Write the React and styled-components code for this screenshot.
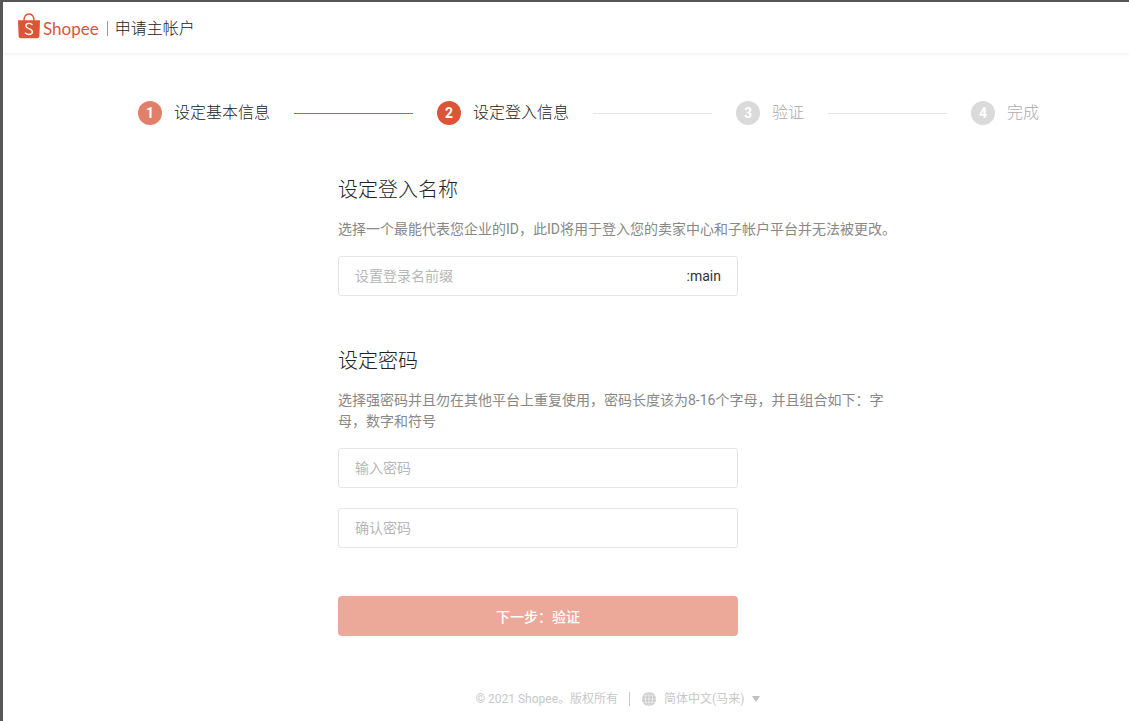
import React, { useState } from 'react'
import styled, { createGlobalStyle } from 'styled-components'

const steps = [
  { label: '设定基本信息', state: 'done' },
  { label: '设定登入信息', state: 'active' },
  { label: '验证', state: 'wait' },
  { label: '完成', state: 'wait' },
]

const circleColors = {
  done: '#e37f67',
  active: '#da5636',
  wait: '#dadada',
}

function ShopeeBag() {
  return (
    <BagIcon viewBox="0 0 22 26" aria-hidden="true">
      <path d="M6 8C6 3.800 8 1 11 1s5 2.800 5 7" fill="none" stroke="#da5636" strokeWidth="1.4" />
      <path d="M.6 7.200h20.800c.4 0 .6.2.6.6L21.400 23c-.1 1.300-.9 2.200-2.200 2.200H2.800C1.500 25.200.7 24.300.6 23L0 7.800c0-.4.2-.6.6-.6z" fill="#da5636" />
      <path d="M14 11.600c-.9-.8-1.900-1.200-3.100-1.200-1.700 0-3 .9-3 2.400 0 1.600 1.400 2.200 3.100 2.800 2 .7 3.400 1.400 3.400 3.200 0 1.700-1.400 2.700-3.400 2.700-1.400 0-2.700-.5-3.700-1.400" fill="none" stroke="#fff" strokeWidth="1.400" strokeLinecap="round" />
    </BagIcon>
  )
}

function Globe() {
  return (
    <GlobeIcon viewBox="0 0 14 14" aria-hidden="true">
      <circle cx="7" cy="7" r="7" fill="#c8c8c8" />
      <path d="M1 3.800h12M0 7h14M1 10.200h12M7 0v14M6 0C2.500 3 2.500 11 6 14M8 0c3.500 3 3.500 11 0 14" fill="none" stroke="#fff" strokeWidth=".6" />
    </GlobeIcon>
  )
}

function App() {
  const [name, setName] = useState('')
  const [password, setPassword] = useState('')
  const [confirm, setConfirm] = useState('')

  return (
    <Page>
      <GlobalStyle />
      <Header>
        <Logo href="#">
          <ShopeeBag />
          <Brand>Shopee</Brand>
        </Logo>
        <HeaderTitle>申请主帐户</HeaderTitle>
      </Header>
      <Main>
        <Steps>
          {steps.map((step, i) => (
            <React.Fragment key={step.label}>
              {i > 0 && <StepLine $done={steps[i - 1].state === 'done'} />}
              <Step>
                <StepNumber $state={step.state}>{i + 1}</StepNumber>
                <StepLabel $state={step.state}>{step.label}</StepLabel>
              </Step>
            </React.Fragment>
          ))}
        </Steps>
        <Form onSubmit={(e) => e.preventDefault()}>
          <Section>
            <Title>设定登入名称</Title>
            <Hint>选择一个最能代表您企业的ID，此ID将用于登入您的卖家中心和子帐户平台并无法被更改。</Hint>
            <Field>
              <Input
                aria-label="设置登录名前缀"
                placeholder="设置登录名前缀"
                value={name}
                onChange={(e) => setName(e.target.value)}
              />
              <Suffix>:main</Suffix>
            </Field>
          </Section>
          <Section>
            <Title>设定密码</Title>
            <Hint>选择强密码并且勿在其他平台上重复使用，密码长度该为8-16个字母，并且组合如下：字母，数字和符号</Hint>
            <Field>
              <Input
                type="password"
                aria-label="输入密码"
                placeholder="输入密码"
                value={password}
                onChange={(e) => setPassword(e.target.value)}
              />
            </Field>
            <Field>
              <Input
                type="password"
                aria-label="确认密码"
                placeholder="确认密码"
                value={confirm}
                onChange={(e) => setConfirm(e.target.value)}
              />
            </Field>
          </Section>
          <NextButton type="submit">下一步：验证</NextButton>
        </Form>
      </Main>
      <Footer>
        <span>© 2021 Shopee。版权所有</span>
        <Language type="button">
          <Globe />
          简体中文(马来)
          <Arrow viewBox="0 0 8 6" aria-hidden="true">
            <path d="M0 0h8L4 6z" fill="#c0c0c0" />
          </Arrow>
        </Language>
      </Footer>
    </Page>
  )
}

export default App

const GlobalStyle = createGlobalStyle`
* {
    box-sizing:border-box;
}
body {
    margin:0;
    background-color:#fff;
    color:#222;
    font-family:Roboto, "Noto Sans CJK SC", sans-serif;
    font-size:14px;
    font-weight:400;
}
`

const Page = styled.div`
min-height:100vh;
border-top:2px solid #595757;
border-left:3px solid #595757;
`

const Header = styled.header`
display:flex;
align-items:center;
height:51px;
padding:2px 15px 0;
box-shadow:0 1px 4px 0 rgba(0, 0, 0, 0.08);
`

const Logo = styled.a`
display:flex;
align-items:center;
gap:3px;
color:#da5636;
text-decoration:none;
`

const BagIcon = styled.svg`
width:22px;
height:26px;
margin-bottom:6px;
`

const Brand = styled.span`
font-family:Lato, sans-serif;
font-size:17px;
line-height:24px;
`

const HeaderTitle = styled.h1`
display:flex;
align-items:center;
margin:0 0 0 8px;
font-size:16px;
line-height:24px;
font-weight:300;

&::before {
    content:'';
    width:1px;
    height:15px;
    margin-right:7px;
    background-color:#999;
}
`

const Main = styled.main`
padding:48px 90px 0 135px;
`

const Steps = styled.div`
display:flex;
align-items:center;
gap:24px;
`

const Step = styled.div`
display:flex;
align-items:center;
gap:12px;
`

const StepNumber = styled.span`
display:flex;
align-items:center;
justify-content:center;
width:24px;
height:24px;
border-radius:50%;
background-color:${(props) => circleColors[props.$state]};
color:#fff;
font-size:14px;
font-weight:700;
`

const StepLabel = styled.span`
color:${(props) => (props.$state === 'wait' ? '#aaa' : '#222')};
font-size:16px;
line-height:24px;
font-weight:300;
`

const StepLine = styled.div`
flex:1;
height:1px;
background-color:${(props) => (props.$done ? '#da5636' : '#e5e5e5')};
`

const Form = styled.form`
max-width:560px;
margin:50px 0 0 200px;
`

const Section = styled.section`
& + & {
    margin-top:50px;
}
`

const Title = styled.h2`
margin:0 0 14px;
font-size:20px;
line-height:30px;
font-weight:300;
`

const Hint = styled.p`
margin:0 0 16px;
color:#888;
font-size:14px;
line-height:21px;
`

const Field = styled.label`
display:flex;
align-items:center;
max-width:400px;
height:40px;
padding:0 16px;
border:1px solid #e5e5e5;
border-radius:3px;

& + & {
    margin-top:20px;
}
`

const Input = styled.input`
flex:1;
min-width:0;
padding:0;
border:0;
outline:0;
background:none;
color:#333;
font:inherit;

&::placeholder {
    color:#b7b7b7;
}
`

const Suffix = styled.span`
color:#333;
`

const NextButton = styled.button`
display:block;
width:100%;
max-width:400px;
height:40px;
margin-top:48px;
border:0;
border-radius:4px;
background-color:#eca99a;
color:#fff;
font:inherit;
font-weight:500;
cursor:pointer;
`

const Footer = styled.footer`
display:flex;
justify-content:center;
align-items:center;
padding:54px 0 12px 104px;
color:#c8c8c8;
font-size:12px;
line-height:18px;
`

const Language = styled.button`
display:flex;
align-items:center;
gap:8px;
margin-left:11px;
padding:0 0 0 12px;
border:0;
border-left:1px solid #c8c8c8;
background:none;
color:inherit;
font:inherit;
line-height:14px;
cursor:pointer;
`

const GlobeIcon = styled.svg`
width:14px;
height:14px;
`

const Arrow = styled.svg`
width:8px;
height:6px;
`
